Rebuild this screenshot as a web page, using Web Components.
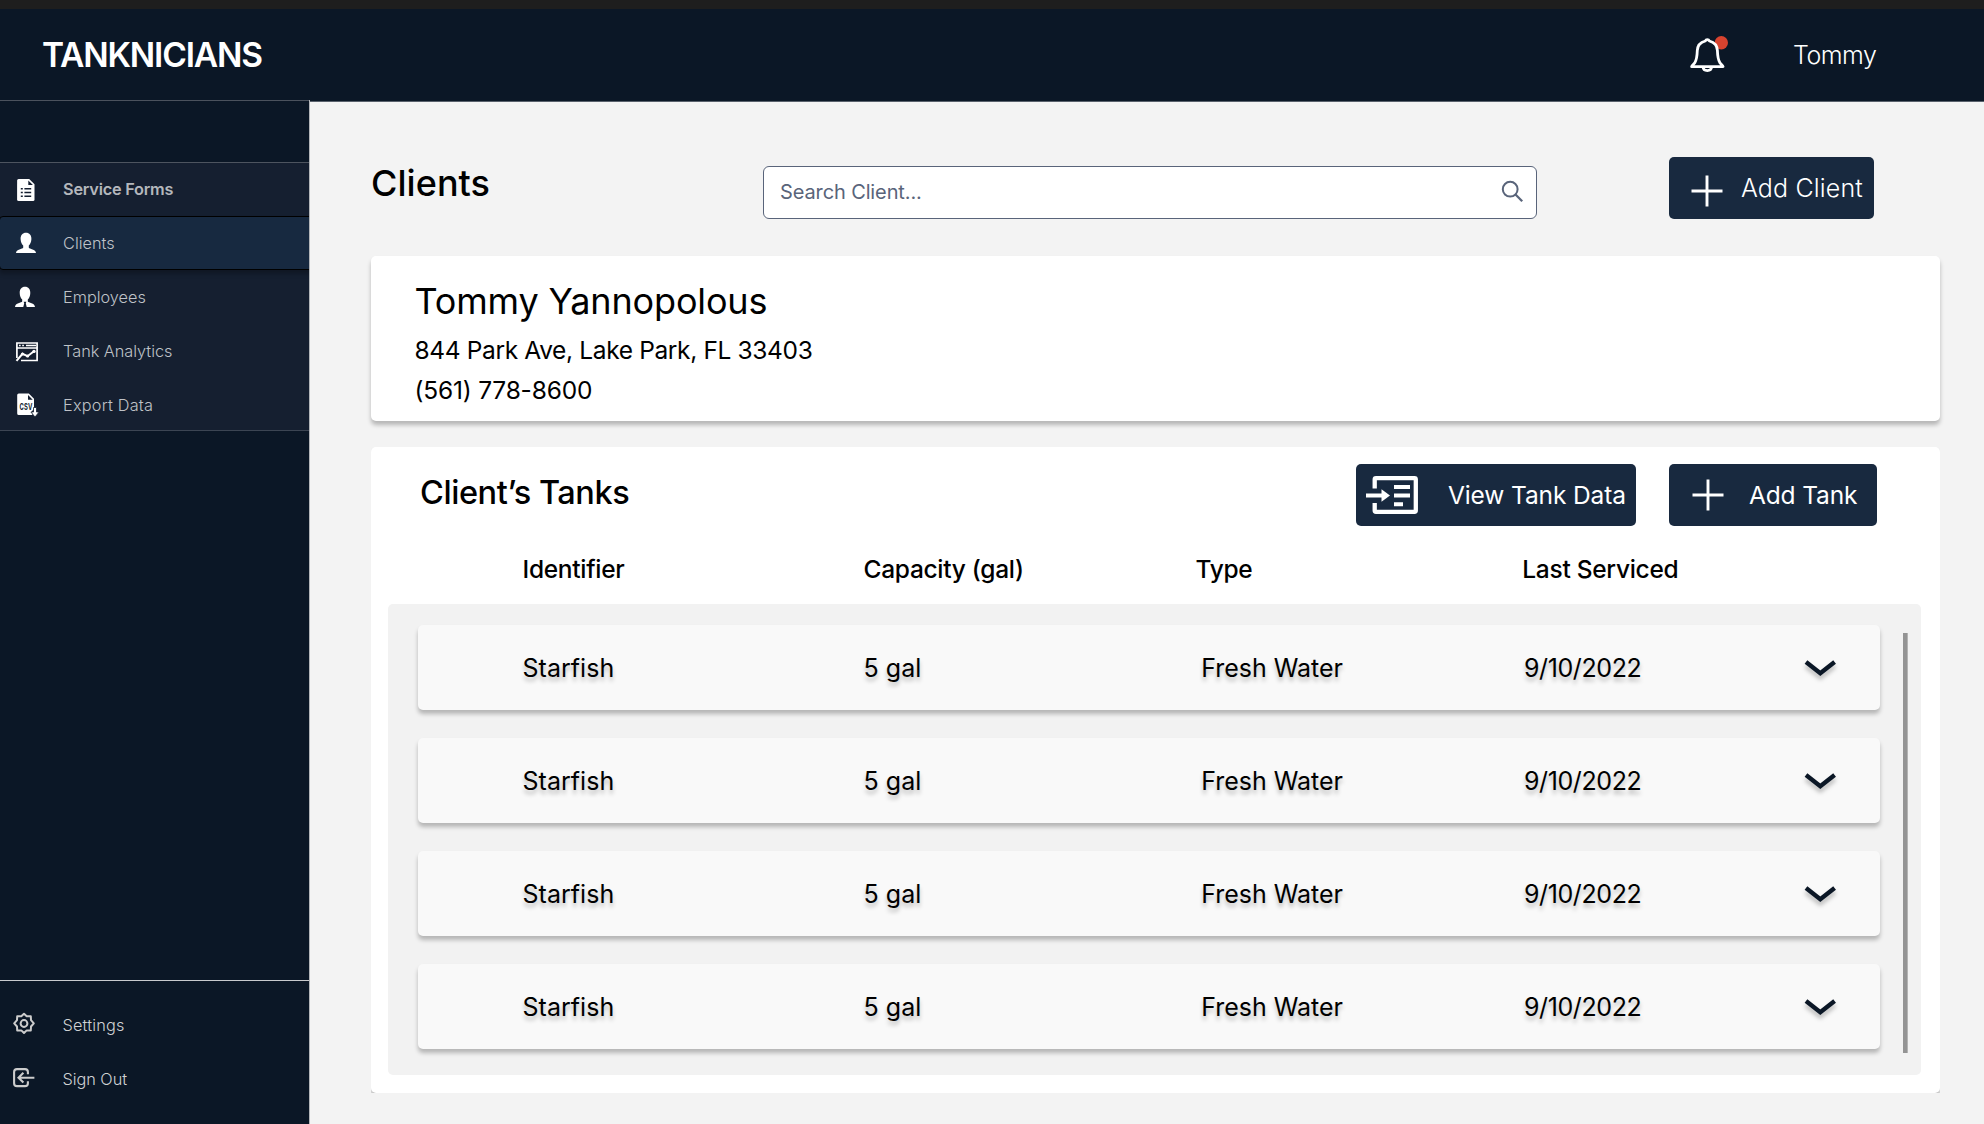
<!DOCTYPE html>
<html lang="en">
<head>
<meta charset="utf-8">
<title>Tanknicians</title>
<style>
  html, body { margin: 0; height: 100%; }
  body { font-family: Inter, "Liberation Sans", sans-serif; background: #f3f3f3; overflow: hidden; }
</style>
</head>
<body>
<tank-app></tank-app>

<script>
const define = (name, html, setup) => {
  const template = document.createElement('template');
  template.innerHTML = html;
  customElements.define(name, class extends HTMLElement {
    constructor() {
      super();
      this.attachShadow({ mode: 'open' }).append(template.content.cloneNode(true));
    }
    connectedCallback() { if (setup) setup(this, this.shadowRoot); }
  });
};

/* Navigation icons share a 48x54 box, the left part of a menu item. */
const navIcons = {
  form: `<path fill="#fff" d="M18.600 16h10.600l5.300 5.300v15.200q0 1.500-1.500 1.500H18.600q-1.500 0-1.500-1.500v-19q0-1.500 1.500-1.500z"/>
    <path fill="#151f30" d="M28.300 17.500v4.500h4.600z"/>
    <path stroke="#151f30" stroke-width="1.500" d="M20.800 25.800h2m1.600 0h6.800M20.800 29.500h2m1.600 0h6.800M20.800 33.200h2m1.600 0h6.800"/>`,
  client: `<path fill="#fff" d="M26 16.700c3.400 0 5.500 2.500 5.400 6.200-.1 3.300-1.300 5.300-2.600 6.700v2.200c.4 1.200 7.200 1.600 7.200 5.200H16c0-3.600 6.800-4 7.200-5.200v-2.200c-1.300-1.400-2.500-3.400-2.600-6.700-.1-3.700 2-6.200 5.400-6.200z"/>`,
  employee: `<path fill="#fff" d="M25 16.700c3.400 0 5.400 2.500 5.300 6.200-.1 3.300-1.200 5.300-2.500 6.700v2c.4 1.200 7.200 1.600 7.200 5.400H15c0-3.800 6.800-4.200 7.200-5.400v-2c-1.300-1.400-2.400-3.400-2.500-6.700-.1-3.700 1.900-6.200 5.300-6.200z"/>
    <path fill="#151f30" d="M23.600 31.800h2.800l-.6 1.400.9 3.800h-3.400l.9-3.800z"/>`,
  chart: `<path fill="none" stroke="#fff" stroke-width="1.700" d="M16.900 34v-15h20.200v17.500H21M16.900 24h20.200"/>
    <path stroke="#fff" stroke-width="1.500" d="M19 21.500h1.700M22.200 21.500h1.700M26 21.500h10"/>
    <path fill="none" stroke="#fff" stroke-width="2" d="M16.500 36.800l6-7 5 2.400 6.500-5"/>
    <circle cx="34" cy="27.400" r="1.700" fill="#fff"/><circle cx="27.600" cy="32" r="1.600" fill="#fff"/><circle cx="22.500" cy="30" r="1.600" fill="#fff"/>`,
  csv: `<path fill="#fff" d="M18.800 15.500h10l5.200 5.200v10l-2.500 3 1 3.400H18.800q-1.600 0-1.600-1.600V17.100q0-1.600 1.600-1.600z"/>
    <path fill="#151f30" d="M28 17v4.700h4.700z"/>
    <text x="19.600" y="31.800" font-size="9" font-weight="700" textLength="13" lengthAdjust="spacingAndGlyphs" fill="#151f30">CSV</text>
    <path fill="#fff" stroke="#151f30" stroke-width=".8" d="M33.500 29.500h3v4.500h2.600l-4.100 5-4.100-5h2.600z"/>`,
  gear: `<g fill="none" stroke="#ccc" stroke-width="2" stroke-linejoin="round"><circle cx="25" cy="25.500" r="3.400"/>
    <path d="M25 15.800l2.700 2.500 4.100-.1.200 3.900 2.800 3.200-2.800 3.200-.2 4-4.100-.1-2.700 2.600-2.700-2.600-4.100.1-.2-4-2.800-3.200 2.800-3.200.2-3.900 4.100.1z"/></g>`,
  exit: `<g fill="none" stroke="#ccc" stroke-width="2.100"><path d="M28.900 22.200v-2.200q0-2.900-2.900-2.900h-8q-2.900 0-2.900 2.900v11.200q0 2.900 2.900 2.900h8q2.900 0 2.900-2.900v-2"/>
    <path d="M35.400 25.700H19.500M24.400 20.800l-4.900 4.900 4.900 4.900"/></g>`
};

const glyphs = {
  plus: ['40', '40', `<path stroke="#fff" stroke-width="2.900" d="M20 4.500v31M4.500 20h31"/>`],
  enter: ['56', '44', `<path fill="none" stroke="#fff" stroke-width="4.300" d="M10.700 15.500V6.500q0-1.300 1.300-1.300H50.500q1.300 0 1.300 1.300v31q0 1.300-1.300 1.300H12q-1.300 0-1.300-1.300v-7.600"/>
    <path stroke="#fff" stroke-width="4" d="M2 22.500h16M30 14h16M30 22.500h16M30 31.200h9"/><path fill="#fff" d="M17.500 16.300l8.500 6.200-8.500 6.200z"/>`]
};

define('top-bar', `
  <style>
    :host { display: flex; box-sizing: border-box; height: 101px; border-top: 9px solid #1e1e1e;
      background: #0b1726; align-items: center; color: #fff; }
    .brand { flex: 1; padding-left: 42px; font-size: 33.5px; font-weight: 600; letter-spacing: -1.18px; }
    svg { width: 44px; height: 44px; }
    .user { width: 191px; padding-left: 60px; font-size: 25px; font-weight: 350; letter-spacing: -.5px; }
  </style>
  <div class="brand">TANKNICIANS</div>
  <svg viewBox="0 0 44 44"><circle cx="32.300" cy="9.700" r="6.700" fill="#d8432f"/>
    <path fill="#0b1726" stroke="#fff" stroke-width="2.800" stroke-linejoin="round" d="M18.300 6.600c-.9 0-1.600.5-2 1.400C11.500 9.200 8.500 13 8.300 17.500c-.2 6.500-.8 9.500-2.500 12.200-1.200 1.900-3 2.600-3.200 3.900h31.500c-.2-1.300-2-2-3.200-3.900-1.700-2.700-2.300-5.700-2.500-12.200-.2-4.500-3.200-8.300-8-9.500-.4-.9-1.100-1.400-2.100-1.400z"/>
    <path fill="none" stroke="#fff" stroke-width="2.800" d="M14 34c.2 2.500 2 3.600 4.300 3.600s4.100-1.100 4.300-3.600"/></svg>
  <div class="user">Tommy</div>`);

define('nav-item', `
  <style>
    :host { display: flex; box-sizing: border-box; height: 54px; align-items: center;
      font-size: 16.3px; font-weight: 350; letter-spacing: -.02px; color: #bfc2c7; }
    :host([strong]) { font-weight: 600; letter-spacing: -.23px; color: #b4b7bc; height: 53px; }
    :host([strong]) slot { display: block; padding-bottom: 2px; }
    :host([wide]) { letter-spacing: .2px; }
    :host([active]) { background: #172940; border: 1px solid #000; border-radius: 4px; margin: 0 -6px 0 -1px;
      position: relative; box-shadow: 0 4px 4px rgba(0,0,0,.25); }
    svg { width: 48px; height: 54px; flex: none; margin-right: 15.1px; }
  </style>
  <svg viewBox="0 0 48 54"></svg><slot></slot>`,
  (el, root) => { root.querySelector('svg').innerHTML = navIcons[el.getAttribute('icon')]; });

define('side-nav', `
  <style>
    :host { display: flex; flex-direction: column; box-sizing: border-box; width: 310px; flex: none;
      background: #0b1726; border-right: 1px solid #b3b6ba; overflow: hidden; }
    .menu { flex: none; margin-top: 61px; border-top: 1px solid #4d545f; border-bottom: 1px solid #3c4553;
      background: #151f30; overflow: hidden; }
    .menu nav-item:last-child { margin-bottom: -2px; }
    .rule { flex: none; height: 1px; background: #4b525d; }
    .foot { margin-top: auto; height: 144px; box-sizing: border-box; border-top: 1px solid #c8cacd; padding-top: 17px; }
    .foot nav-item { color: #d0d2d4; margin-left: -.7px; }
  </style>
  <div class="rule"></div>
  <div class="menu">
    <nav-item icon="form" strong>Service Forms</nav-item>
    <nav-item icon="client" active>Clients</nav-item>
    <nav-item icon="employee">Employees</nav-item>
    <nav-item icon="chart">Tank Analytics</nav-item>
    <nav-item icon="csv" wide>Export Data</nav-item>
  </div>
  <div class="foot">
    <nav-item icon="gear" wide>Settings</nav-item>
    <nav-item icon="exit">Sign Out</nav-item>
  </div>`);

define('action-button', `
  <style>
    :host { display: flex; box-sizing: border-box; height: 62.5px; align-items: center; flex: none;
      background: #18293f; border-radius: 5px; color: #fff; font-size: 24.5px; white-space: nowrap; }
    svg { flex: none; }
  </style>
  <svg></svg><slot></slot>`,
  (el, root) => {
    const [w, h, art] = glyphs[el.getAttribute('glyph')];
    const svg = root.querySelector('svg');
    svg.setAttribute('viewBox', `0 0 ${w} ${h}`);
    svg.style.cssText = `width:${w}px;height:${h}px;margin:${el.getAttribute('inset')}`;
    svg.innerHTML = art;
  });

define('search-box', `
  <style>
    :host { display: flex; box-sizing: border-box; width: 774px; height: 53px; align-items: center;
      justify-content: space-between; padding: 0 11.5px 2px 16px; flex: none; background: #fff; border: 1px solid #59647a;
      border-radius: 6px; color: #59647a; font-size: 20px; letter-spacing: -.12px; }
    svg { width: 26px; height: 26px; }
  </style>
  <slot></slot>
  <svg viewBox="0 0 26 26" fill="none" stroke="#59647a" stroke-width="2"><circle cx="11.200" cy="10.200" r="7.400"/><path d="M16.500 15.500l6.700 6.700" stroke-width="2.300"/></svg>`);

define('client-card', `
  <style>
    :host { display: block; box-sizing: border-box; height: 165px; margin-top: 37px; padding: 22px 0 0 43.5px;
      background: #fff; border-radius: 5px; box-shadow: 0 4px 4px rgba(0,0,0,.25); color: #000; }
    .name { font-size: 36px; line-height: 46px; font-weight: 400; letter-spacing: -.15px; }
    .line { font-size: 24.5px; line-height: 40px; font-weight: 400; letter-spacing: -.36px; }
    .name + .line { margin-top: 6px; }
    .phone { letter-spacing: -.19px; }
  </style>
  <div class="name"><slot name="name"></slot></div>
  <div class="line"><slot name="address"></slot></div>
  <div class="line phone"><slot name="phone"></slot></div>`);

define('tank-row', `
  <style>
    :host { display: grid; box-sizing: border-box; height: 85px; grid-template-columns: 341px 337.8px 322.7px 276px 40px;
      align-items: center; padding-left: 104.5px; background: #f9f9f9; border-radius: 5px;
      box-shadow: 0 4px 4px rgba(0,0,0,.25); font-size: 25px; font-weight: 400; letter-spacing: .03px;
      text-shadow: 0 4px 4px rgba(0,0,0,.25); color: #000; }
    .type { letter-spacing: -.03px; }
    .date { letter-spacing: -.4px; }
    svg { width: 40px; height: 40px; filter: drop-shadow(0 4px 2px rgba(0,0,0,.25)); }
  </style>
  <span class="name"></span><span class="size"></span><span class="type"></span><span class="date"></span>
  <svg viewBox="0 0 40 40"><path fill="none" stroke="#0b1726" stroke-width="4.400" d="M6 14l14.300 11.300L34.600 14"/></svg>`,
  (el, root) => { for (const k of ['name', 'size', 'type', 'date']) root.querySelector('.' + k).textContent = el.getAttribute(k); });

define('tank-panel', `
  <style>
    :host { display: block; height: 646px; margin-top: 26px; clip-path: inset(0); }
    .card { box-sizing: border-box; height: 646px; padding: 16.5px 19px 0 17px; background: #fff; border-radius: 5px;
      box-shadow: 0 4px 4px rgba(0,0,0,.25); color: #000; }
    .bar { display: flex; gap: 33px; height: 62.5px; }
    h2 { flex: 1; margin: -5px 0 0; padding-left: 32px; font-size: 32.5px; font-weight: 460; line-height: 67px; letter-spacing: -.43px; }
    .heads { display: grid; grid-template-columns: 341px 332px 326.8px auto; padding-left: 134.5px; margin-top: 22.5px;
      font-size: 24.5px; line-height: 40px; font-weight: 460; letter-spacing: -.29px; }
    .list { display: flex; box-sizing: border-box; height: 471px; margin-top: 15.5px; padding: 21px 13px 0 30px;
      background: #f2f2f2; border-radius: 5px; justify-content: space-between; }
    .rows { display: flex; flex-direction: column; gap: 28px; width: 1462px; }
    .thumb { width: 5px; height: 420px; margin-top: 8px; background: linear-gradient(90deg, #949494 4px, #b4b4b4 4px); }
    .bar action-button:first-of-type { width: 280px; letter-spacing: -.12px; }
    .bar action-button:last-of-type { width: 207.5px; margin-right: 44.5px; letter-spacing: -.15px; }
  </style>
  <div class="card">
    <div class="bar">
      <h2>Client’s Tanks</h2>
      <action-button glyph="enter" inset="0 28px 0 8px">View Tank Data</action-button>
      <action-button glyph="plus" inset="0 21px 0 19px">Add Tank</action-button>
    </div>
    <div class="heads"><span>Identifier</span><span>Capacity (gal)</span><span>Type</span><span>Last Serviced</span></div>
    <div class="list">
      <div class="rows"><slot></slot></div>
      <div class="thumb"></div>
    </div>
  </div>`);

define('tank-app', `
  <style>
    :host { display: flex; flex-direction: column; height: 1124px; }
    .body { display: flex; flex: 1; min-height: 0; margin-top: -1px; }
    main { flex: 1; margin-top: 1px; padding: 0 44px 0 61px; border-top: 1px solid #59616c; background: #f3f3f3; }
    .tools { display: flex; height: 63px; padding-top: 54px; align-items: flex-start; }
    h1 { width: 392px; margin: 3px 0 0; font-size: 36px; line-height: 49px; font-weight: 460; letter-spacing: .05px; }
    search-box { margin-top: 10px; }
    .tools action-button { width: 204.5px; margin: .5px 0 0 132px; font-size: 25px; font-weight: 360; letter-spacing: .16px; }
  </style>
  <top-bar></top-bar>
  <div class="body">
    <side-nav></side-nav>
    <main>
      <div class="tools">
        <h1>Clients</h1>
        <search-box>Search Client...</search-box>
        <action-button glyph="plus" inset="6px 14px 0 18px"><span>Add Client</span></action-button>
      </div>
      <client-card>
        <span slot="name">Tommy Yannopolous</span>
        <span slot="address">844 Park Ave, Lake Park, FL 33403</span>
        <span slot="phone">(561) 778-8600</span>
      </client-card>
      <tank-panel>
        <tank-row name="Starfish" size="5 gal" type="Fresh Water" date="9/10/2022"></tank-row>
        <tank-row name="Starfish" size="5 gal" type="Fresh Water" date="9/10/2022"></tank-row>
        <tank-row name="Starfish" size="5 gal" type="Fresh Water" date="9/10/2022"></tank-row>
        <tank-row name="Starfish" size="5 gal" type="Fresh Water" date="9/10/2022"></tank-row>
      </tank-panel>
    </main>
  </div>`);
</script>
</body>
</html>
